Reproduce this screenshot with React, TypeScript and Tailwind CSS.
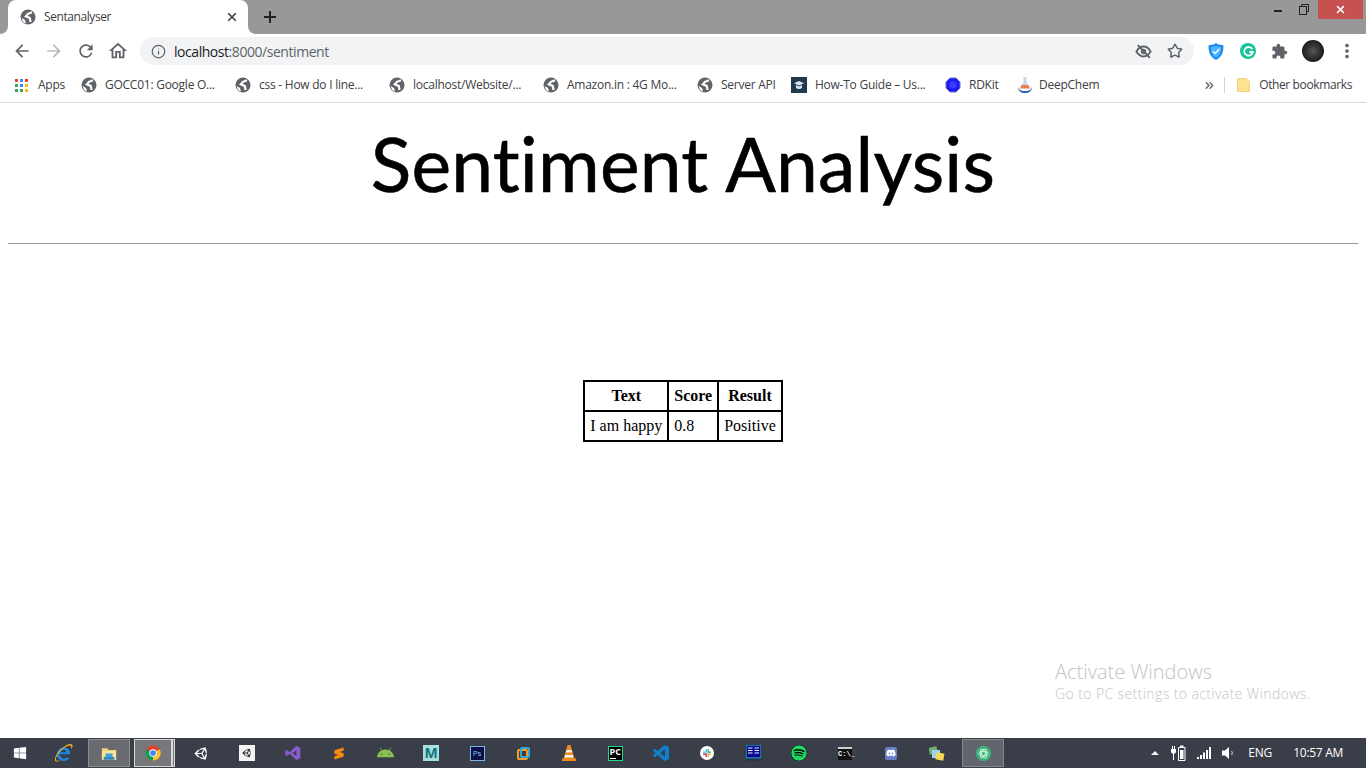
import React from "react";
import {
  MdArrowBack, MdArrowForward, MdRefresh, MdOutlineHome, MdExtension, MdMoreVert,
} from "react-icons/md";
import { Info, Star, ChevronsRight } from "lucide-react";
import { FaWindows, FaAndroid, FaSpotify, FaDiscord, FaUnity } from "react-icons/fa";
import { SiSublimetext } from "react-icons/si";

const ui = "font-['Open_Sans','Noto_Sans',sans-serif]";

const bookmarks = [
  { t: "GOCC01: Google O...", w: "w-[111px]", ml: "ml-[16px]" },
  { t: "css - How do I line...", w: "w-[107px]", ml: "ml-[19px]" },
  { t: "localhost/Website/...", w: "w-[109px]", ml: "ml-[23px]" },
  { t: "Amazon.in : 4G Mo...", w: "w-[110px]", ml: "ml-[21px]" },
  { t: "Server API", w: "w-[54px]", ml: "ml-[20px]" },
];

function Globe() {
  return (
    <svg width="16" height="16" viewBox="0 0 16 16" className="shrink-0">
      <circle cx="8" cy="8" r="7.500" fill="#5f6368" />
      <path d="M12 3.200L8 4.800 5.800 7.300l4 1.700 .8 4" fill="none" stroke="#fff" strokeWidth="2.200" />
      <path d="M1.500 9l3.500 2 1 3.500L3 13z" fill="#fff" />
    </svg>
  );
}

function CloseX({ s, c, w = 2 }: { s: number; c: string; w?: number }) {
  return (
    <svg width={s} height={s} viewBox="0 0 12 12" fill="none" stroke={c} strokeWidth={w}>
      <path d="M1.500 1.500l9 9M10.500 1.500l-9 9" />
    </svg>
  );
}

function AppsIcon() {
  const c = ["#ea4335", "#4285f4", "#ea4335", "#34a853", "#4285f4", "#fbbc05", "#34a853", "#34a853", "#fbbc05"];
  return (
    <span className="grid grid-cols-3 gap-[2px] w-[13px] h-[13px] shrink-0">
      {c.map((x, i) => (
        <svg key={i} viewBox="0 0 3 3" className="w-full h-full"><rect width="3" height="3" fill={x} /></svg>
      ))}
    </span>
  );
}

function Bookmark({ t, w, ml }: { t: string; w: string; ml: string }) {
  return (
    <div className={`flex items-center gap-[8px] ${ml}`}>
      <Globe />
      <span className={`${w} -mt-px whitespace-nowrap text-[12px] tracking-[-0.25px] text-[#3c4043]`}>{t}</span>
    </div>
  );
}

function Chrome({ s = 16 }: { s?: number }) {
  return (
    <svg width={s} height={s} viewBox="0 0 24 24">
      <circle cx="12" cy="12" r="11.5" fill="#db4437" />
      <path d="M12 12 L22 6.2 A11.5 11.5 0 0 1 12 23.5 Z" fill="#fbc02d" />
      <path d="M12 12 L12 23.5 A11.5 11.5 0 0 1 2 6.2 Z" fill="#0f9d58" />
      <circle cx="12" cy="12" r="5.6" fill="#fff" />
      <circle cx="12" cy="12" r="4.3" fill="#4285f4" />
    </svg>
  );
}

function Cell({ children, cls = "" }: { children?: React.ReactNode; cls?: string }) {
  return <div className={`w-[46px] h-[30px] flex items-center justify-center shrink-0 ${cls}`}>{children}</div>;
}

function Taskbar() {
  return (
    <div className={`h-[30px] shrink-0 bg-[#3a3e49] flex items-stretch relative ${ui}`}>
      <div className="w-[40px] flex items-center justify-center">
        <FaWindows className="w-[14px] h-[14px] text-white" />
      </div>
      <Cell>
        <svg width="20" height="20" viewBox="0 0 24 24" fill="none">
          <path d="M6 13.5h14.5c.3-4.6-3-8-7.6-8-4.5 0-8 3.4-8.4 8 .4 4.8 4 8 8.4 8 3.1 0 5.6-1.400 7-3.800h-4.500c-.6.8-1.500 1.200-2.500 1.200-2 0-3.700-1.500-3.900-3.400zM8.500 11c.3-1.900 2-3 4-3s3.500 1.100 3.700 3z" fill="#1e88e5" fillRule="evenodd" />
          <path d="M3 22c-2-2 0-8 6-14S21 0 23 2c1.500 1.500-.5 4-1.500 5.500C22 5 22 3.500 21 3c-2-.8-8 2-12 7S2 19 4 21c1 .7 3 .5 5-.5-2.500 1.900-5 2.500-6 1.500z" fill="#f0b429" />
        </svg>
      </Cell>
      <div className="w-[42px] h-[28px] my-px ml-[2px] bg-[#6a6b70] border border-[#8e8f93] flex items-center justify-center">
        <svg width="16" height="15" viewBox="0 0 18 16">
          <path d="M1 2h6l1.500 2H17v11H1z" fill="#f3d36f" />
          <rect x="1" y="5" width="16" height="10" fill="#f8e39a" />
          <rect x="5" y="8" width="8" height="4" fill="#3b9fd8" />
          <rect x="3" y="12" width="12" height="3" fill="#2a86c3" />
        </svg>
      </div>
      <div className="w-[38px] h-[28px] my-px ml-[4px] bg-[#77787c] border border-[#d8d8da] flex items-center justify-center">
        <Chrome />
      </div>
      <div className="w-[3px] h-[28px] my-px bg-[#77787c] border border-[#d8d8da]" />
      <div className="w-[5px]" />
      <Cell cls="-ml-[2px]"><FaUnity className="w-[15px] h-[15px] text-white" /></Cell>
      <Cell>
        <div className="w-[16px] h-[16px] bg-[#f4f4f4] flex items-center justify-center">
          <FaUnity className="w-[10px] h-[10px] text-[#222]" />
        </div>
      </Cell>
      <Cell>
        <svg width="16" height="16" viewBox="0 0 24 24">
          <path d="M17 1.500L23 4v16l-6 2.500L7 13l-4.500 3.500-2-1v-7l2-1L7 11zM17 7.500L11.500 12l5.500 4.500z" fill="#8a5cd0" fillRule="evenodd" />
        </svg>
      </Cell>
      <Cell><SiSublimetext className="w-[12px] h-[13px] text-[#f58c0a]" /></Cell>
      <Cell><FaAndroid className="w-[17px] h-[17px] text-[#8cc152]" /></Cell>
      <Cell>
        <div className="w-[16px] h-[16px] bg-[#a6e0dc] flex items-center justify-center text-[14px] leading-none font-bold text-[#12747c]">M</div>
      </Cell>
      <Cell>
        <div className="w-[15px] h-[15px] bg-[#0b1145] border border-[#7fb4e6] flex items-center justify-center text-[8px] leading-none text-[#8fc4f4]">Ps</div>
      </Cell>
      <Cell>
        <div className="relative w-[13px] h-[13px]">
          <div className="absolute left-0 top-[2px] w-[11px] h-[11px] rounded-[2px] border-2 border-[#f3a024]" />
          <div className="absolute right-0 top-0 w-[10px] h-[11px] rounded-[2px] border-2 border-[#35a9d6]" />
        </div>
      </Cell>
      <Cell>
        <svg width="14" height="16" viewBox="0 0 14 16">
          <path d="M5.500 0h3l4 13.500H14V16H0v-2.500h1.500z" fill="#f08a1d" />
          <path d="M4.600 5h4.800l.6 2.400H4zM3.200 10h7.600l.7 2.500h-9z" fill="#f4f4f4" />
        </svg>
      </Cell>
      <Cell>
        <div className="w-[15px] h-[15px] bg-black border border-[#21d789] flex flex-col px-[1px] text-[9px] leading-[9px] font-bold text-white">
          PC
          <div className="w-[6px] h-[1px] mt-[2px] bg-white" />
        </div>
      </Cell>
      <Cell>
        <svg width="16" height="16" viewBox="0 0 24 24">
          <path d="M23.15 2.587L18.21.21a1.494 1.494 0 0 0-1.705.29l-9.46 8.63-4.12-3.128a.999.999 0 0 0-1.276.057L.327 7.261A1 1 0 0 0 .326 8.74L3.899 12 .326 15.26a1 1 0 0 0 .001 1.479L1.65 17.94a.999.999 0 0 0 1.276.057l4.12-3.128 9.46 8.63a1.492 1.492 0 0 0 1.704.29l4.942-2.377A1.5 1.5 0 0 0 24 20.06V3.939a1.5 1.500 0 0 0-.85-1.352zm-5.146 14.861L10.826 12l7.178-5.448v10.896z" fill="#0f80cc" />
        </svg>
      </Cell>
      <Cell>
        <div className="w-[14px] h-[14px] rounded-full bg-white flex flex-wrap items-center justify-center">
          <svg width="10" height="10" viewBox="0 0 10 10">
            <rect x="1" y="3.500" width="3.500" height="1.300" fill="#36c5f0" />
            <rect x="3.500" y="1" width="1.300" height="3" fill="#36c5f0" />
            <rect x="5.500" y="1" width="1.300" height="3.500" fill="#2eb67d" />
            <rect x="5.500" y="3.500" width="3.500" height="1.300" fill="#2eb67d" />
            <rect x="5.500" y="5.500" width="3.500" height="1.300" fill="#ecb22e" />
            <rect x="5.500" y="5.500" width="1.300" height="3.500" fill="#ecb22e" />
            <rect x="1" y="5.500" width="3.500" height="1.300" fill="#e01e5a" />
            <rect x="3.500" y="5.500" width="1.300" height="3.500" fill="#e01e5a" />
          </svg>
        </div>
      </Cell>
      <Cell>
        <svg width="15" height="16" viewBox="0 0 15 16">
          <rect x="0" y="0" width="15" height="13" fill="#0a0a8a" stroke="#19d3e6" strokeWidth="1" />
          <path d="M2 3h4.500M2 5.500h4.500M2 8h4.500M8.500 3H13M8.500 5.500H13M8.500 8H13" stroke="#e8f4ff" strokeWidth="1" />
          <rect x="0" y="13.500" width="15" height="2" fill="#203048" />
        </svg>
      </Cell>
      <Cell><FaSpotify className="w-[16px] h-[16px] text-[#1ed760] bg-black rounded-full" /></Cell>
      <Cell>
        <div className="w-[14px] h-[13px] bg-[#111] border-t-2 border-[#cfcfcf] flex items-center text-[7px] leading-none font-bold text-white font-['Liberation_Mono',monospace]">C:\_</div>
      </Cell>
      <Cell>
        <div className="w-[12px] h-[13px] rounded-[2px] bg-[#6a7ec6] flex items-center justify-center">
          <FaDiscord className="w-[10px] h-[10px] text-white" />
        </div>
      </Cell>
      <Cell>
        <svg width="16" height="16" viewBox="0 0 16 16">
          <rect x="0" y="2" width="8" height="7" fill="#6fb26a" transform="rotate(-10 4 5)" />
          <rect x="3" y="5" width="8" height="8" fill="#9fd1f2" />
          <rect x="7" y="8" width="8" height="7" fill="#f4dc5a" transform="rotate(10 11 11)" />
        </svg>
      </Cell>
      <div className="w-[42px] h-[28px] my-px ml-[2px] bg-[#62656c] border border-[#85878c] flex items-center justify-center">
        <div className="w-[15px] h-[15px] rounded-full bg-[#3fb67c] flex items-center justify-center">
          <svg width="11" height="11" viewBox="0 0 24 24" fill="none" stroke="#d8f5e4" strokeWidth="2">
            <ellipse cx="12" cy="12" rx="10" ry="4.500" />
            <ellipse cx="12" cy="12" rx="10" ry="4.500" transform="rotate(60 12 12)" />
            <ellipse cx="12" cy="12" rx="10" ry="4.500" transform="rotate(120 12 12)" />
          </svg>
        </div>
      </div>
      <div className="flex-1" />
      <div className="flex items-center text-white">
        <svg width="8" height="4" viewBox="0 0 8 4" className="mr-[12px]"><path d="M0 4L4 0l4 4z" fill="#eee" /></svg>
        <svg width="15" height="16" viewBox="0 0 15 16" className="mr-[11px]" fill="#fff">
          <path d="M0 4h1V1h1v3h1V1h1v3h1v3.500L3 9v6H2V9L0 7.500z" />
          <path d="M7.500 2.500h6.500v13H7.500z" fill="none" stroke="#fff" strokeWidth="1" />
          <rect x="9" y="0.500" width="3.500" height="2" />
          <rect x="9" y="5" width="3.500" height="9" />
        </svg>
        <svg width="15" height="12" viewBox="0 0 15 12" className="mr-[10px]" fill="#fff">
          <rect x="0" y="10" width="2" height="2" /><rect x="3" y="8" width="2" height="4" />
          <rect x="6" y="5.500" width="2" height="6.500" /><rect x="9" y="3" width="2" height="9" /><rect x="12" y="0" width="2" height="12" />
        </svg>
        <svg width="14" height="14" viewBox="0 0 14 14" className="mr-[12px]" fill="none">
          <path d="M0 4.500h3L7 1v12L3 9.500H0z" fill="#fff" />
          <path d="M9.500 5c1 1.200 1 2.800 0 4" stroke="#ddd" strokeWidth="1" />
        </svg>
        <span className="text-[12px] tracking-[-0.3px] w-[45px]">ENG</span>
        <span className="text-[12px] tracking-[-0.3px] mr-[23px]">10:57 AM</span>
      </div>
    </div>
  );
}

export default function App() {
  return (
    <div className="h-screen w-full flex flex-col bg-white overflow-hidden">
      {/* Tab strip */}
      <div className={`h-[34px] shrink-0 bg-[#989898] flex items-stretch relative ${ui}`}>
        <div className="ml-[8px] w-[240px] bg-white rounded-t-[8px] flex items-center relative pl-[12px] pr-[11px]">
          <Globe />
          <span className="ml-[8px] text-[12px] tracking-[-0.42px] text-[#3c4043] flex-1">Sentanalyser</span>
          <CloseX s={10} c="#3c4043" />
          <svg width="8" height="8" viewBox="0 0 8 8" className="absolute bottom-0 -left-[8px]"><path d="M8 0v8H0c4 0 8-3 8-8z" fill="#fff" /></svg>
          <svg width="8" height="8" viewBox="0 0 8 8" className="absolute bottom-0 -right-[8px]"><path d="M0 0v8h8C4 8 0 5 0 0z" fill="#fff" /></svg>
        </div>
        <div className="ml-[16px] flex items-center">
          <svg width="12" height="12" viewBox="0 0 12 12" fill="none" stroke="#202124" strokeWidth="2"><path d="M6 0v12M0 6h12" /></svg>
        </div>
        <div className="flex-1" />
        <div className="flex items-start h-[19px]">
          <div className="w-[26px] h-[19px] flex items-start justify-center pt-[10px]">
            <div className="w-[8px] h-[2px] bg-[#222]" />
          </div>
          <div className="w-[26px] h-[19px] flex items-center justify-center">
            <svg width="10" height="11" viewBox="0 0 10 11" fill="none" stroke="#222" strokeWidth="1">
              <rect x="0.500" y="2.500" width="7" height="8" />
              <path d="M2.500 2.500v-2h7v7h-2" />
            </svg>
          </div>
          <div className="w-[45px] h-[19px] bg-[#c75050] flex items-center justify-center ml-[1px] mr-[3px]">
            <CloseX s={9} c="#fff" />
          </div>
        </div>
      </div>

      {/* Toolbar */}
      <div className={`h-[34px] shrink-0 bg-white flex items-center ${ui}`}>
        <div className="w-[140px] flex items-center">
          <MdArrowBack className="ml-[12px] w-[20px] h-[20px] text-[#5f6368]" />
          <MdArrowForward className="ml-[12px] w-[20px] h-[20px] text-[#b8babd]" />
          <MdRefresh className="ml-[12px] w-[20px] h-[20px] text-[#5f6368]" />
          <MdOutlineHome className="ml-[11px] w-[22px] h-[22px] text-[#5f6368]" />
        </div>
        <div className="w-[1054px] h-[28px] rounded-full bg-[#f1f3f4] flex items-center pl-[11px] pr-[11px]">
          <Info className="w-[15px] h-[15px] text-[#5f6368]" strokeWidth={2} />
          <span className="ml-[8px] mt-px text-[14px] tracking-[-0.45px] text-[#202124]">localhost<span className="text-[#5f6368]">:8000/sentiment</span></span>
          <div className="flex-1" />
          <svg width="17" height="17" viewBox="0 0 24 24" fill="none" stroke="#5f6368" strokeWidth="2.600">
            <path d="M2 12s4-7 10-7 10 7 10 7-4 7-10 7-10-7-10-7z" />
            <circle cx="12" cy="12" r="2.500" />
            <path d="M4 3l17 18" />
          </svg>
          <Star className="ml-[15px] w-[16px] h-[16px] text-[#5f6368]" strokeWidth={2.2} />
        </div>
        <div className="flex items-center flex-1">
          <svg width="16" height="17" viewBox="0 0 16 17" className="ml-[14px]">
            <path d="M8 0c2 1.500 4.500 2.200 7.500 2.200 0 7-1.500 11.500-7.500 14.800C2 13.700.500 9.200.500 2.200 3.500 2.200 6 1.500 8 0z" fill="#1a8cf0" />
            <path d="M8 2.500c1.500 1 3.300 1.500 5.200 1.600 0 5-1.200 8.300-5.200 10.600C4 12.400 2.800 9.100 2.800 4.100 4.700 4 6.500 3.500 8 2.500z" fill="#4db2ff" />
            <path d="M4.800 8.200l2.300 2.300 4.200-4.500" fill="none" stroke="#fff" strokeWidth="1.500" />
          </svg>
          <div className="ml-[16px] w-[16px] h-[16px] rounded-full bg-[#15c39a] flex items-center justify-center">
            <svg width="11" height="11" viewBox="0 0 11 11" fill="none" stroke="#fff" strokeWidth="1.800">
              <path d="M9.300 3.200A4.300 4.300 0 1 0 9.800 6H6.500" />
            </svg>
          </div>
          <MdExtension className="ml-[15px] w-[17px] h-[17px] text-[#5f6368]" />
          <div className="ml-[14px] w-[22px] h-[22px] rounded-full bg-[radial-gradient(circle_at_50%_50%,#555,#1c1c1c_70%)]" />
          <MdMoreVert className="ml-[12px] w-[22px] h-[22px] text-[#5f6368]" />
        </div>
      </div>

      {/* Bookmarks */}
      <div className={`h-[35px] shrink-0 bg-white border-b border-[#d9d9d9] flex items-center ${ui}`}>
        <div className="ml-[15px]"><AppsIcon /></div>
        <span className="ml-[10px] -mt-px w-[27px] text-[12px] tracking-[-0.25px] text-[#3c4043]">Apps</span>
        {bookmarks.map((b) => <Bookmark key={b.t} {...b} />)}
        <div className="ml-[16px] flex items-center gap-[8px]">
          <div className="w-[16px] h-[16px] bg-[#1f3a4d] flex items-center justify-center">
            <svg width="12" height="12" viewBox="0 0 12 12">
              <path d="M6 2L1 4.200l5 2.200 5-2.200z" fill="#dfe7ec" />
              <path d="M3 6v3c1.500 1.300 4.500 1.300 6 0V6L6 7.400z" fill="#dfe7ec" />
            </svg>
          </div>
          <span className="w-[112px] -mt-px whitespace-nowrap text-[12px] tracking-[-0.25px] text-[#3c4043]">How-To Guide – Us...</span>
        </div>
        <div className="ml-[18px] flex items-center gap-[8px]">
          <svg width="16" height="16" viewBox="0 0 16 16">
            <path d="M5 1h6L15 5v6L11 15H5L1 11V5z" fill="#1c1cf0" stroke="#6a6ad0" />
            <circle cx="8" cy="8" r="3.500" fill="#3c3cff" />
          </svg>
          <span className="w-[30px] -mt-px whitespace-nowrap text-[12px] tracking-[-0.25px] text-[#3c4043]">RDKit</span>
        </div>
        <div className="ml-[18px] flex items-center gap-[6px]">
          <svg width="16" height="17" viewBox="0 0 16 17">
            <path d="M6.500 0h3v5l3 6h-9l3-6z" fill="#cfd6e0" />
            <path d="M4.500 8h7l1.500 3.500H3z" fill="#ee7a50" />
            <path d="M1 10c0 4 3 6 7 6s7-2 7-6c-1 3-3 4-7 4s-6-1-7-4z" fill="#2f5fb0" />
          </svg>
          <span className="w-[59px] -mt-px whitespace-nowrap text-[12px] tracking-[-0.25px] text-[#3c4043]">DeepChem</span>
        </div>
        <div className="flex-1" />
        <ChevronsRight className="w-[13px] h-[13px] text-[#5f6368]" strokeWidth={2.5} />
        <div className="ml-[8px] w-px h-[16px] bg-[#d4d4d4]" />
        <svg width="13" height="14" viewBox="0 0 13 14" className="ml-[12px]">
          <path d="M0.500 0.500h8.500l3.500 3v10H0.500z" fill="#fde293" stroke="#f0d27a" />
        </svg>
        <span className="ml-[9px] -mt-px mr-[14px] text-[12px] tracking-[-0.38px] text-[#3c4043] whitespace-nowrap">Other bookmarks</span>
      </div>

      {/* Page */}
      <div className="flex-1 relative px-[8px] overflow-hidden">
        <h1 className="mt-[19px] h-[82px] text-center text-[75px] leading-[82px] font-normal tracking-[0.2px] [-webkit-text-stroke:0.6px_#000] text-black font-['Lato','Noto_Sans',sans-serif]">
          Sentiment Analysis
        </h1>
        <hr className="mt-[39px] border-0 h-px bg-[#9a9a9a]" />
        <table className="mx-auto mt-[136px] border-collapse font-['Liberation_Serif',serif] text-[16px] leading-[18px] text-black">
          <thead>
            <tr>
              <th className="border-2 border-black px-[5px] h-[30px] font-bold">Text</th>
              <th className="border-2 border-black px-[5px] h-[30px] font-bold">Score</th>
              <th className="border-2 border-black px-[5px] h-[30px] font-bold">Result</th>
            </tr>
          </thead>
          <tbody>
            <tr>
              <td className="border-2 border-black px-[5px] h-[30px]">I am happy</td>
              <td className="border-2 border-black px-[5px] h-[30px]">0.8</td>
              <td className="border-2 border-black px-[5px] h-[30px]">Positive</td>
            </tr>
          </tbody>
        </table>
        <div className={`absolute left-[1055px] top-[556px] font-light text-[#c4c4c4] ${ui}`}>
          <div className="text-[20px] leading-[26px] tracking-[0px]">Activate Windows</div>
          <div className="text-[14px] leading-[18px] tracking-[0.4px]">Go to PC settings to activate Windows.</div>
        </div>
      </div>

      <Taskbar />
    </div>
  );
}
